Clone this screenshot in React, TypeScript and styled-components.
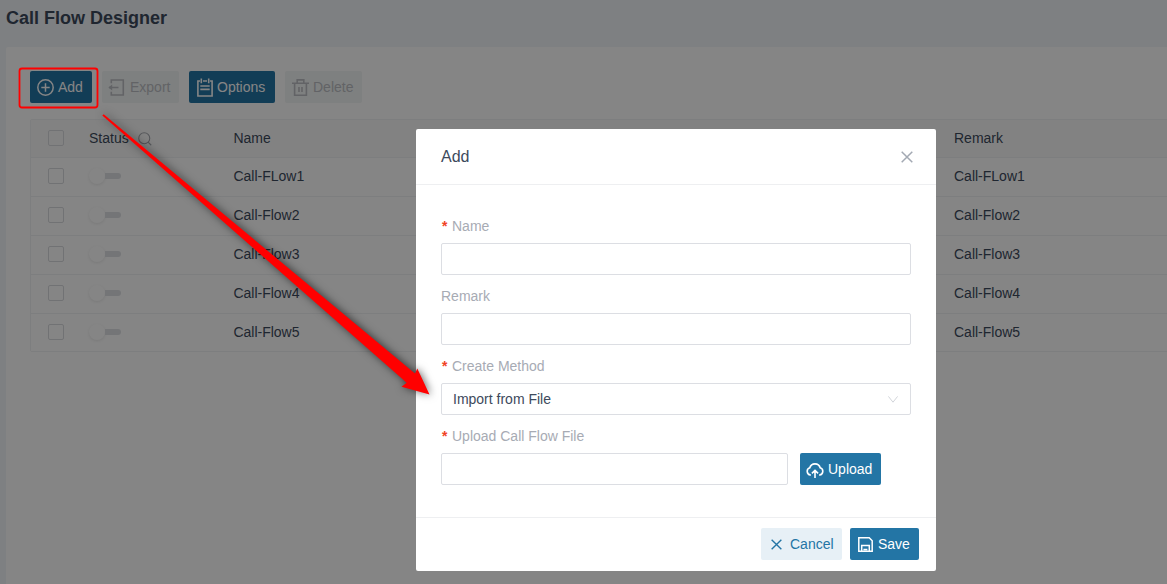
import React from "react";
import styled, { createGlobalStyle } from "styled-components";

const GlobalStyle = createGlobalStyle`
  * { box-sizing: border-box; }
  html, body { margin: 0; overflow: hidden; }
  body {
    background: #f2f5f9;
    color: #3d4a5c;
    font: 14px/20px "Liberation Sans", Arial, sans-serif;
  }
`;

const Page = styled.div`
  position: relative;
  height: 584px;
  overflow: hidden;
`;

const Title = styled.h1`
  margin: 0;
  padding: 6px 0 0 6px;
  height: 47px;
  font-size: 18px;
  line-height: 24px;
  font-weight: 700;
  color: #3d4a5c;
`;

const Card = styled.main`
  margin-left: 6px;
  padding: 24px 0 0 24px;
  height: 537px;
  background: #fff;
  border-top-left-radius: 2px;
`;

const Toolbar = styled.div`
  display: flex;
  gap: 10px;
  margin-bottom: 16px;
`;

type Variant = "primary" | "disabled" | "light";

const fills: Record<Variant, string> = { primary: "#2375a5", disabled: "#f2f5f5", light: "#e7f0f6" };
const inks: Record<Variant, string> = { primary: "#fff", disabled: "#bcbec3", light: "#2375a5" };

const Button = styled.button<{ $variant: Variant; $width: number; $pad: number; $gap: number }>`
  display: flex;
  align-items: center;
  flex: none;
  gap: ${(p) => p.$gap}px;
  width: ${(p) => p.$width}px;
  height: 32px;
  padding: 0 0 0 ${(p) => p.$pad}px;
  border: 0;
  border-radius: 2px;
  background: ${(p) => fills[p.$variant]};
  color: ${(p) => inks[p.$variant]};
  font: inherit;
  white-space: nowrap;
`;

const Icon = styled.svg`
  display: block;
  flex: none;
  fill: none;
  stroke: currentColor;
`;

const Table = styled.div`
  width: 1200px;
  border: 1px solid #f0f1f3;
  border-radius: 2px;
`;

const Row = styled.div<{ $head?: boolean }>`
  display: grid;
  grid-template-columns: 58px 144.4px 720.6px 1fr;
  align-items: center;
  height: ${(p) => (p.$head ? 38 : 39)}px;
  padding-bottom: ${(p) => (p.$head ? 1 : 2)}px;
  border-bottom: 1px solid #f0f1f3;
  background: ${(p) => (p.$head ? "#fafafa" : "#fff")};
  &:last-child { border-bottom: 0; height: 37px; padding-bottom: 1px; }
`;

const Checkbox = styled.span`
  width: 16px;
  height: 16px;
  margin-left: 17px;
  border: 1px solid #d9dbdf;
  border-radius: 2px;
`;

const StatusHead = styled.span`
  display: flex;
  align-items: center;
  gap: 9px;
  svg { color: #a5a8ae; margin-top: 2px; }
`;

const Switch = styled.span`
  display: flex;
  align-items: center;
  width: 32px;
  height: 16px;
  &::before {
    content: "";
    width: 16px;
    height: 16px;
    border-radius: 50%;
    background: #fff;
    box-shadow: 0 1px 3px rgba(0, 0, 0, 0.09);
  }
  &::after {
    content: "";
    width: 16px;
    height: 6px;
    border-radius: 0 3px 3px 0;
    background: #dfe1e5;
  }
`;

const Backdrop = styled.div`
  position: absolute;
  inset: 0;
  padding: 129px 0 0 416px;
  background: rgba(0, 0, 0, 0.48);
`;

const Dialog = styled.section`
  display: flex;
  flex-direction: column;
  width: 520px;
  height: 442px;
  background: #fff;
  border-radius: 2px;
`;

const DialogHeader = styled.header`
  display: flex;
  align-items: center;
  justify-content: space-between;
  height: 56px;
  padding: 0 23px 0 25px;
  border-bottom: 1px solid #eeeff1;
  font-size: 16px;
  svg { color: #a3a9b3; }
`;

const DialogBody = styled.form`
  flex: 1;
  padding: 30px 25px 0;
`;

const Field = styled.div`
  height: 70px;
`;

const Label = styled.label<{ $required?: boolean }>`
  display: flex;
  align-items: center;
  height: 22px;
  margin-bottom: 6px;
  color: #a7abb4;
  &::before {
    content: "*";
    display: ${(p) => (p.$required ? "block" : "none")};
    width: 11px;
    text-indent: -0.6px;
    color: #f04325;
    font: 700 14px/14px "Liberation Mono", monospace;
    margin-top: 3px;
  }
`;

const Control = styled.div<{ $width?: number }>`
  display: flex;
  align-items: center;
  justify-content: space-between;
  width: ${(p) => p.$width ?? 470}px;
  height: 32px;
  padding: 0 12px 0 11px;
  border: 1px solid #dcdee3;
  border-radius: 2px;
  svg { color: #d2d5da; }
`;

const UploadLine = styled.div`
  display: flex;
  gap: 12px;
`;

const DialogFooter = styled.footer`
  display: flex;
  justify-content: flex-end;
  gap: 8px;
  height: 54px;
  padding: 10px 17px 0 0;
  border-top: 1px solid #eeeff1;
`;

const Annotation = styled.svg`
  position: absolute;
  left: 0;
  top: 0;
  pointer-events: none;
`;

const ArrowShape = styled.path`
  fill: #f00;
  filter: drop-shadow(1px 0 4px rgba(0, 0, 0, 0.6));
`;

const AddIcon = () => (
  <Icon width="17" height="17" viewBox="0 0 17 17" strokeWidth="1.5">
    <circle cx="8.5" cy="8.5" r="7.7" />
    <path d="M8.5 4.3v8.4M4.3 8.5h8.4" />
  </Icon>
);
const ExportIcon = () => (
  <Icon width="17" height="17" viewBox="0 0 17 17" strokeWidth="1.6">
    <path d="M3.3 4.2V1h12v15h-12v-3.2M1 8.5h9.5" />
    <path d="M4.2 5.6.4 8.5l3.8 2.9z" fill="currentColor" stroke="none" />
  </Icon>
);
const OptionsIcon = () => (
  <Icon width="16" height="19" viewBox="0 0 16 19" strokeWidth="1.6">
    <path d="M3 3H.9v15h14.2V3H13M6 3h4M4.3.4v4.8M11.7.4v4.8M3.3 8h9.4M3.3 11.4h9.4" />
  </Icon>
);
const DeleteIcon = () => (
  <Icon width="17" height="17" viewBox="0 0 17 17" strokeWidth="1.6">
    <path d="M0 4.2h17M5.2 4V.9h6.6V4M2.6 4.2v12h11.8v-12M7 8v5M10 8v5" />
  </Icon>
);
const UploadIcon = () => (
  <Icon width="18" height="17" viewBox="0 0 18 17" strokeWidth="1.6">
    <path d="M4.9 14H4.4A3.7 3.7 0 0 1 3.8 6.8 5.4 5.4 0 0 1 14.2 6.8a3.7 3.7 0 0 1-.6 7.2h-.5M9 17V9.6M5.9 12.4 9 9.4l3.1 3" />
  </Icon>
);
const SaveIcon = () => (
  <Icon width="15" height="15" viewBox="0 0 15 15" strokeWidth="1.5">
    <path d="M.8.8h10.4l3 3v10.4H.8zM3.7 14V8.6h7.6V14M5.4 12.4h4" />
  </Icon>
);
const CrossIcon = ({ size }: { size: number }) => (
  <Icon width={size} height={size} viewBox="0 0 12 12" strokeWidth="1.5">
    <path d="m.7.7 10.6 10.6M11.3.7.7 11.3" />
  </Icon>
);
const SearchIcon = () => (
  <Icon width="14" height="14" viewBox="0 0 15 15" strokeWidth="1.2">
    <circle cx="6.7" cy="6.7" r="5.9" />
    <path d="m10.8 10.8 3.4 3.4" />
  </Icon>
);
const ChevronIcon = () => (
  <Icon width="10" height="7" viewBox="0 0 10 7" strokeWidth="1">
    <path d="M.4.4 5 6.2 9.6.4" />
  </Icon>
);

const flows = ["Call-FLow1", "Call-Flow2", "Call-Flow3", "Call-Flow4", "Call-Flow5"];

export default function App() {
  return (
    <Page>
      <GlobalStyle />
      <Title>Call Flow Designer</Title>
      <Card>
        <Toolbar>
          <Button $variant="primary" $width={62} $pad={7} $gap={4}><AddIcon />Add</Button>
          <Button $variant="disabled" $width={77} $pad={6} $gap={5}><ExportIcon />Export</Button>
          <Button $variant="primary" $width={86} $pad={8} $gap={4}><OptionsIcon />Options</Button>
          <Button $variant="disabled" $width={77} $pad={7} $gap={4}><DeleteIcon />Delete</Button>
        </Toolbar>
        <Table>
          <Row $head>
            <Checkbox />
            <StatusHead>Status<SearchIcon /></StatusHead>
            <span>Name</span>
            <span>Remark</span>
          </Row>
          {flows.map((name) => (
            <Row key={name}>
              <Checkbox />
              <Switch />
              <span>{name}</span>
              <span>{name}</span>
            </Row>
          ))}
        </Table>
      </Card>
      <Backdrop>
        <Dialog>
          <DialogHeader>Add<CrossIcon size={12} /></DialogHeader>
          <DialogBody>
            <Field><Label $required>Name</Label><Control /></Field>
            <Field><Label>Remark</Label><Control /></Field>
            <Field>
              <Label $required>Create Method</Label>
              <Control>Import from File<ChevronIcon /></Control>
            </Field>
            <Field>
              <Label $required>Upload Call Flow File</Label>
              <UploadLine>
                <Control $width={347} />
                <Button type="button" $variant="primary" $width={81} $pad={6} $gap={4}><UploadIcon />Upload</Button>
              </UploadLine>
            </Field>
          </DialogBody>
          <DialogFooter>
            <Button $variant="light" $width={81} $pad={10} $gap={8}><CrossIcon size={11} />Cancel</Button>
            <Button $variant="primary" $width={69} $pad={8} $gap={5}><SaveIcon />Save</Button>
          </DialogFooter>
        </Dialog>
      </Backdrop>
      <Annotation width="1167" height="584" viewBox="0 0 1167 584">
        <rect x="19.5" y="68.5" width="78" height="39" rx="2.5" fill="none" stroke="#f00" strokeWidth="1.8" />
        <ArrowShape d="M102.3 115.5 103.7 114.3 415 373.5 417.3 368.5 429.5 394.5 401.5 386.8 406.7 382.8Z" />
      </Annotation>
    </Page>
  );
}
